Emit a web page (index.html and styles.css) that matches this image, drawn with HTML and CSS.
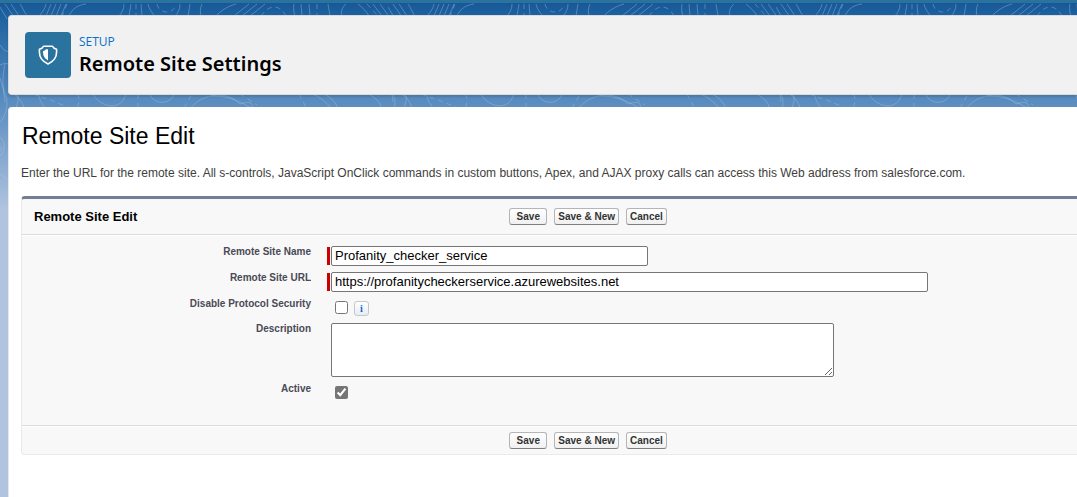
FILE: index.html
```html
<!DOCTYPE html>
<html lang="en">
<head>
<meta charset="utf-8">
<title>Remote Site Settings</title>
<link rel="stylesheet" href="styles.css">
</head>
<body>
<svg class="backdrop" aria-hidden="true">
  <defs>
    <pattern id="contours" width="388" height="240" patternUnits="userSpaceOnUse">
      <g fill="none" stroke="#a9c6e6" stroke-opacity=".38" stroke-width="1">
        <path d="M0 7 L7 19 M5 4 L14 17 M11 4 L19 16 M20 4 C23 8 24 12 27 16 M46 4 C45 9 42 13 38 17 M51 4 L46 16 M56 4 L51 16 M61 4 L56 16 M66 4 L61 16 M86 4 C76 5 71 11 69 16"/>
        <path d="M124 4 C124 9 122 13 118 17 M131 4 L129 16 M141 4 L142 16 M148 4 C149 9 152 13 155 16 M180 4 C180 9 178 13 175 16 M190 4 L188 16 M202 4 C200 8 200 12 201 16"/>
        <path d="M236 4 C228 6 220 11 215 17 M249 4 L234 16 M257 4 L242 16 M265 4 L250 16 M294 4 C293 9 294 13 295 16 M301 4 L302 16 M309 4 L310 16 M328 4 L330 16 M346 4 C341 8 341 13 342 16 M358 4 C363 8 367 12 369 16"/>
        <path stroke-dasharray="5 4" d="M157 4 C159 14 173 15 176 5 M261 16 C270 3 280 5 286 16 M67 4 L62 16 M136 4 V16 M317 4 V16 M367 4 L378 16"/>
        <path d="M373 4 L382 16 M380 4 L388 15"/>
        <path d="M0 45 Q5 53 9 51 M0 65 Q5 62 9 64 M5 64 C2 77 2 90 7 99 C7 108 6 117 0 122 M0 78 Q4 88 5 102 M0 137 C5 141 6 151 0 156 M0 146 Q3 147 0 151 M0 174 L9 180 M0 191 L8 196"/>
        <path d="M14 94 C20 99 23 103 24 109 M38 94 Q40 102 45 108 M93 94 C98 105 120 114 126 94 M150 94 C153 105 171 105 174 94 M190 109 C203 92 228 91 240 104 Q255 99 252 109 M211 96 Q231 95 253 109 M312 94 Q322 97 332 109 M324 94 Q335 99 338 109 M369 94 C378 100 381 103 381 109 M16 109 C18 99 21 96 14 94"/>
        <path stroke-dasharray="5 4" d="M33 94 L53 101 L72 109 M77 94 Q81 99 77 109 M138 94 V109 M184 108 L192 94 M240 94 L257 105 M299 94 L307 109"/>
      </g>
    </pattern>
  </defs>
  <rect width="100%" height="100%" fill="url(#contours)"/>
</svg>

<div class="page">
  <header class="page-header">
    <span class="header-icon">
      <svg viewBox="0 0 20 20" width="20" height="20" aria-hidden="true">
        <path d="M5.500 1.200H14.500C15.200 2.900 16.600 3.800 18.600 4.200V7C18.600 12.200 15.500 16.500 10 18.900C4.500 16.500 1.400 12.200 1.400 7V4.200C3.400 3.800 4.800 2.900 5.500 1.200Z" fill="none" stroke="#fff" stroke-width="1.600" stroke-linejoin="round"/>
        <path d="M10 4.300V15.500C7 14 5 11 5 7.300V6.300C6.500 5.800 7.200 5.200 8 4.300Z" fill="#fff"/>
      </svg>
    </span>
    <div>
      <p class="eyebrow">SETUP</p>
      <h1 class="page-title">Remote Site Settings</h1>
    </div>
  </header>

  <main class="content">
    <h2 class="content-title">Remote Site Edit</h2>
    <p class="intro">Enter the URL for the remote site. All s-controls, JavaScript OnClick commands in custom buttons, Apex, and AJAX proxy calls can access this Web address from salesforce.com.</p>

    <form class="panel">
      <div class="panel-bar panel-head">
        <h3 class="panel-title">Remote Site Edit</h3>
        <div class="actions">
          <button type="button" class="btn">Save</button>
          <button type="button" class="btn">Save &amp; New</button>
          <button type="button" class="btn">Cancel</button>
        </div>
      </div>

      <div class="fields">
        <div class="field">
          <label for="site-name">Remote Site Name</label>
          <div class="control required"><input id="site-name" class="text-box name-box" type="text" value="Profanity_checker_service" required></div>
        </div>
        <div class="field">
          <label for="site-url">Remote Site URL</label>
          <div class="control required"><input id="site-url" class="text-box url-box" type="text" value="https://profanitycheckerservice.azurewebsites.net" required></div>
        </div>
        <div class="field">
          <label for="protocol">Disable Protocol Security</label>
          <div class="control checks"><input id="protocol" type="checkbox"><button type="button" class="info" aria-label="Information">i</button></div>
        </div>
        <div class="field">
          <label for="description">Description</label>
          <div class="control"><textarea id="description" class="description-box"></textarea></div>
        </div>
        <div class="field">
          <label for="active">Active</label>
          <div class="control checks"><input id="active" type="checkbox" checked></div>
        </div>
      </div>

      <div class="panel-bar panel-foot">
        <div class="actions">
          <button type="button" class="btn">Save</button>
          <button type="button" class="btn">Save &amp; New</button>
          <button type="button" class="btn">Cancel</button>
        </div>
      </div>
    </form>
  </main>
</div>
</body>
</html>
```
FILE: styles.css
```css
* {
  box-sizing: border-box;
}

body {
  margin: 0;
  min-height: 100vh;
  border-top: 3px solid #2a739e;
  background: linear-gradient(#195594 0, #1b5f9e 12px, #5b8dc0 104px, #b0c4df 210px) #b0c4df;
  font-family: "Liberation Sans", Arial, sans-serif;
  color: #000;
}

h1, h2, h3, p {
  margin: 0;
}

.backdrop {
  position: absolute;
  top: 0;
  left: 0;
  width: 100%;
  height: 200px;
  z-index: -1;
}

.page {
  display: flex;
  flex-direction: column;
  gap: 12px;
  min-height: calc(100vh - 3px);
  padding: 12px 0 0 8px;
}

.page-header {
  display: flex;
  align-items: flex-start;
  gap: 8px;
  padding: 16px;
  border: 1px solid #dddbda;
  border-right: 0;
  border-radius: 4px 0 0 4px;
  background: #f1f1f1;
  box-shadow: 0 2px 2px rgba(0, 0, 0, .12);
}

.header-icon {
  display: flex;
  align-items: center;
  justify-content: center;
  width: 46px;
  height: 46px;
  border-radius: 4px;
  background: #2a739e;
}

.eyebrow {
  font: 400 12px/20px "Open Sans", "Noto Sans", sans-serif;
  color: #0b6fc9;
}

.page-title {
  font: 600 20px/24px "Noto Sans", "Open Sans", sans-serif;
}

.content {
  flex: 1;
  padding: 15px 0 40px 12px;
  border-radius: 4px 0 0 0;
  border-left: 1px solid #e4e8ee;
  background: #fff;
}

.content-title {
  padding-left: 1px;
  font-size: 23px;
  font-weight: 400;
  line-height: 28px;
}

.intro {
  margin-top: 15px;
  font-size: 12px;
  line-height: 16px;
  color: #3e3e3c;
}

.panel {
  margin-top: 15px;
  border: 1px solid #eaeaea;
  border-top: 3px solid #747e96;
  border-right: 0;
  border-radius: 4px 0 0 4px;
  background: #f8f8f8;
}

.panel-bar {
  display: grid;
  grid-template-columns: 46% 1fr;
  align-items: center;
}

.panel-head {
  padding: 9px 0;
  border-bottom: 1px solid #dbdbdb;
}

.panel-foot {
  padding: 6px 0 5px;
  border-top: 1px solid #dbdbdb;
  box-shadow: inset 0 1px #fff;
}

.panel-title {
  padding-left: 12px;
  font-size: 13px;
  line-height: 16px;
}

.actions {
  grid-column: 2;
  display: flex;
  gap: 7px;
  padding-left: 2px;
}

.btn {
  min-width: 38px;
  height: 17px;
  padding: 0 3px;
  border: 1px solid #b5b5b5;
  border-bottom-color: #7f7f7f;
  border-radius: 3px;
  background: linear-gradient(#fff, #f0f0f0);
  font: bold 10px/14px "Liberation Sans", Arial, sans-serif;
  color: #333;
}

.fields {
  display: flex;
  flex-direction: column;
  gap: 6px;
  padding: 11px 0 23px;
  box-shadow: inset 0 1px #fff;
}

.field {
  display: grid;
  grid-template-columns: 289px 1fr;
  column-gap: 16px;
}

.field label {
  font-size: 10px;
  font-weight: bold;
  line-height: 12px;
  text-align: right;
  color: #4a4a56;
}

.control {
  display: flex;
  padding-left: 4px;
}

.required {
  padding-left: 0;
}

.required::before {
  content: "";
  width: 3px;
  margin: 1px 1px 1px 0;
  background: #c00;
}

.text-box,
.description-box {
  max-width: 100%;
  border: 1px solid #767676;
  border-radius: 2px;
  background: #fff;
  font: 13px/16px "Liberation Sans", Arial, sans-serif;
  color: #000;
}

.text-box {
  height: 20px;
  padding: 0 3px 1px;
}

.name-box {
  width: 317px;
}

.url-box {
  width: 597px;
}

.description-box {
  display: block;
  width: 503px;
  height: 54px;
}

.checks {
  gap: 6px;
  min-height: 19px;
  padding: 3px 0 0 8px;
}

.checks input {
  width: 13px;
  height: 13px;
  margin: 0;
  accent-color: #767676;
}

.info {
  width: 15px;
  height: 15px;
  padding: 0;
  border: 1px solid #c4c8cd;
  border-radius: 3px;
  background: linear-gradient(#fff, #e9ecf1);
  font: bold 10px/12px "Liberation Serif", serif;
  color: #0b6bd0;
}
```
